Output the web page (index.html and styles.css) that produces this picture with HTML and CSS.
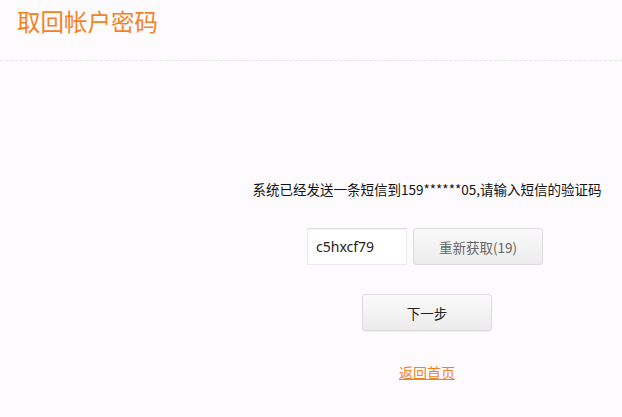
FILE: index.html
```html
<!DOCTYPE html>
<html lang="zh-CN">
<head>
<meta charset="utf-8">
<title>取回帐户密码</title>
<link rel="stylesheet" href="styles.css">
</head>
<body>
<div class="page">
  <header class="header">
    <h1 class="title">取回帐户密码</h1>
  </header>
  <main class="main">
    <p class="notice">系统已经发送一条短信到159******05,请输入短信的验证码</p>
    <div class="code-row">
      <input class="code-input" type="text" value="c5hxcf79">
      <button class="btn btn-resend" type="button">重新获取(19)</button>
    </div>
    <button class="btn btn-next" type="button">下一步</button>
    <a class="home-link" href="#">返回首页</a>
  </main>
</div>
</body>
</html>
```

FILE: styles.css
```css
html, body {
  margin: 0;
  padding: 0;
  background: #fdfbfe;
}
body {
  font-family: "Noto Sans CJK SC", "Noto Sans", sans-serif;
  color: #333;
  width: 622px;
  height: 417px;
  overflow: hidden;
}
.header {
  height: 61px;
  border-bottom: 1px dashed #e6e4e8;
  box-sizing: border-box;
  padding: 5px 0 0 17px;
}
.title {
  margin: 0;
  font-size: 23.5px;
  line-height: 32px;
  font-weight: normal;
  color: #f5821f;
}
.main {
  display: flex;
  flex-direction: column;
  align-items: center;
  padding-left: 232px;
  padding-top: 118px;
}
.notice {
  margin: 0;
  font-size: 13.5px;
  line-height: 20px;
  color: #111;
  white-space: nowrap;
}
.code-row {
  display: flex;
  gap: 6px;
  margin-top: 29px;
  margin-right: 4px;
}
.code-input {
  width: 100px;
  height: 37px;
  box-sizing: border-box;
  border: 1px solid #ebe9ec;
  border-top-color: #dcdadd;
  background: #fff;
  padding: 0 8px;
  font-family: "Noto Sans", "Open Sans", sans-serif;
  font-size: 14px;
  color: #222;
  outline: none;
  box-shadow: inset 0 1px 1px rgba(0,0,0,0.04);
}
.btn {
  box-sizing: border-box;
  border: 1px solid #dddbde;
  border-radius: 3px;
  background: linear-gradient(#fafafa, #ececec);
  font-family: "Noto Sans CJK SC", "Noto Sans", sans-serif;
  font-size: 13.5px;
  cursor: pointer;
  padding: 0;
}
.btn-resend {
  width: 130px;
  height: 37px;
  color: #666;
}
.btn-next {
  width: 130px;
  height: 37px;
  margin-top: 29px;
  color: #222;
  box-shadow: 0 1px 1px rgba(0,0,0,0.06);
}
.home-link {
  margin-top: 31px;
  font-size: 14px;
  line-height: 20px;
  color: #f5821f;
  text-decoration: underline;
}
```
